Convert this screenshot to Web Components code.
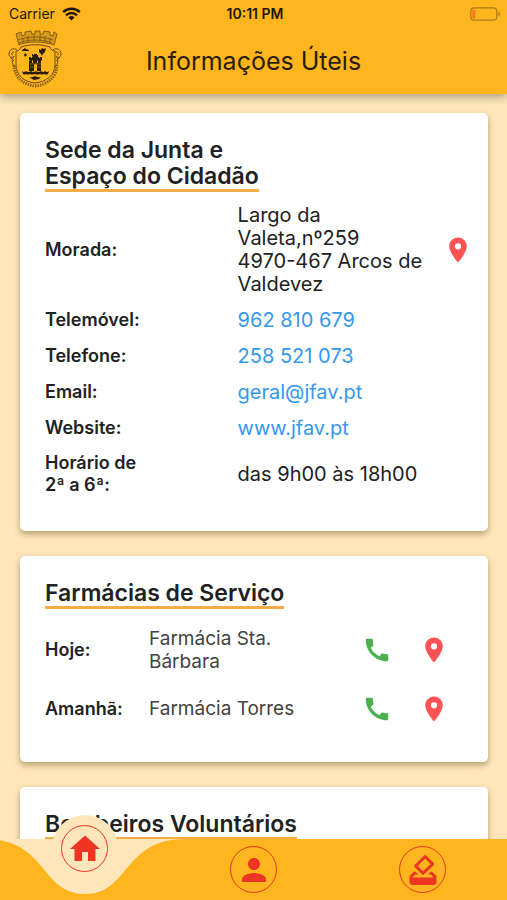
<!DOCTYPE html>
<html lang="pt">
<head>
<meta charset="utf-8">
<meta name="viewport" content="width=device-width, initial-scale=1">
<title>Informações Úteis</title>
<style>
  html, body { height: 100%; margin: 0; }
  body {
    --amber: #ffb51d;
    --cream: #fee6ba;
    --red: #ee3524;
    --line: #fbab45;
    font-family: Inter, "Noto Sans", sans-serif;
    color: #212121;
  }
</style>
</head>
<body>
<app-shell>
  <status-bar slot="top"></status-bar>
  <app-header slot="top">Informações Úteis</app-header>

  <info-card>
    <span slot="title">Sede da Junta e<br>Espaço do Cidadão</span>
    <contact-table></contact-table>
  </info-card>
  <info-card>
    <span slot="title">Farmácias de Serviço</span>
    <pharmacy-table></pharmacy-table>
  </info-card>
  <info-card>
    <span slot="title">Bombeiros Voluntários</span>
  </info-card>

  <nav-bar slot="bottom"></nav-bar>
</app-shell>

<script>
const ICONS = {
  pin: '<path d="M12 2C8.13 2 5 5.13 5 9c0 5.25 7 13 7 13s7-7.75 7-13c0-3.87-3.13-7-7-7zm0 9.5a2.5 2.5 0 1 1 0-5 2.5 2.5 0 0 1 0 5z"/>',
  phone: '<path d="M20.01 15.38c-1.23 0-2.42-.2-3.53-.56a.98.98 0 0 0-1.01.24l-1.57 1.97c-2.83-1.35-5.48-3.9-6.89-6.83l1.95-1.66c.27-.28.35-.67.24-1.02-.37-1.11-.56-2.3-.56-3.53 0-.54-.45-.99-.99-.99H4.19C3.65 3 3 3.24 3 3.99 3 13.28 10.73 21 20.01 21c.71 0 .99-.63.99-1.18v-3.45c0-.54-.45-.99-.99-.99z"/>',
  home: '<path d="M10 20v-6h4v6h5v-8h3L12 3 2 12h3v8z"/>',
  person: '<path d="M12 12c2.21 0 4-1.79 4-4s-1.79-4-4-4-4 1.79-4 4 1.79 4 4 4zm0 2c-2.67 0-8 1.34-8 4v2h16v-2c0-2.66-5.33-4-8-4z"/>',
  vote: '<path d="M18 13h-.68l-2 2h1.91L19 17H5l1.78-2h2.05l-2-2H6l-3 3v4c0 1.1.89 2 1.99 2H19c1.1 0 2-.89 2-2v-4l-3-3zm-1-5.05l-4.95 4.95-3.54-3.54 4.95-4.95L17 7.95zm-4.24-5.66L6.39 8.66a1 1 0 0 0 0 1.41l4.95 4.95c.39.39 1.02.39 1.41 0l6.36-6.36a1 1 0 0 0 0-1.41L14.16 2.3a.98.98 0 0 0-1.4-.01z"/>'
}

class AppShell extends HTMLElement{
  constructor(){
    super();
  }
  connectedCallback(){
    this.attachShadow({mode:"open"}).innerHTML=`
    <style>
      :host {
        display: flex;
        flex-direction: column;
        height: 100vh;
        background: var(--cream);
      }
      header {
        z-index: 1;
        background: var(--amber);
        box-shadow: 0 3px 8px rgba(0, 0, 0, 0.3);
      }
      main {
        flex: 1;
        min-height: 0;
        overflow-y: auto;
        scrollbar-width: none;
        display: flex;
        flex-direction: column;
        gap: 25px;
        padding: 19px 19px 25px 20px;
      }
    </style>
    <header><slot name="top"></slot></header>
    <main><slot></slot></main>
    <slot name="bottom"></slot>
    `;
  }
}

class StatusBar extends HTMLElement{
  constructor(){
    super();
  }
  connectedCallback(){
    this.attachShadow({mode:"open"}).innerHTML=`
    <style>
      :host {
        display: grid;
        grid-template-columns: 1fr auto 1fr;
        align-items: center;
        height: 27px;
        padding: 0 6px 0 9px;
        font-size: 14px;
        color: #1f1708;
      }
      .left { display: flex; align-items: center; gap: 7px; }
      .time { font-weight: 600; }
      .battery { justify-self: end; }
      svg { display: block; }
    </style>
    <span class="left">Carrier
      <svg width="19" height="14" viewBox="0 0 19 14" fill="none" stroke="#1f1708" stroke-width="2.5">
        <path d="M1.2 5.2a12 12 0 0 1 16.6 0"/>
        <path d="M4 8.3a8 8 0 0 1 11 0"/>
        <path d="M9.5 13.6 6.4 10.4a4.6 4.6 0 0 1 6.2 0z" fill="#1f1708" stroke="none"/>
      </svg>
    </span>
    <span class="time">10:11 PM</span>
    <svg class="battery" width="31" height="14" viewBox="0 0 31 14">
      <rect x=".8" y=".8" width="26" height="12.4" rx="3.5" fill="none" stroke="#a77919" stroke-width="1.2"/>
      <path d="M28.5 4.5c1.8.5 1.8 4.5 0 5z" fill="#a77919"/>
      <rect x="2.3" y="2.5" width="3" height="9" rx="1.3" fill="#ff7526"/>
    </svg>
    `;
  }
}

class AppHeader extends HTMLElement{
  constructor(){
    super();
  }
  connectedCallback(){
    this.attachShadow({mode:"open"}).innerHTML=`
    <style>
      :host {
        display: grid;
        grid-template-columns: 56px 1fr 56px;
        align-items: center;
        height: 67px;
        padding: 0 7px;
      }
      h1 {
        margin: 0;
        font-size: 25px;
        line-height: 30px;
        font-weight: 400;
        text-align: center;
        color: #2a1e08;
      }
      svg { display: block; align-self: start; margin-top: 3px; }
    </style>
    <svg width="56" height="60" viewBox="0 0 56 60" fill="none" stroke="#6b4c12" stroke-width="1">
      <!-- mural crown -->
      <path d="M9 4l5-2 1 4 3-1V2l6-1 1 3h3V1h5v3h3l1-3 6 1v3l3 1 1-4 3 2-3 11C37 11 19 11 12 15z" fill="#8c6415" fill-opacity=".35" stroke-width=".8"/>
      <path d="M11 10c10-4 25-4 35 0M12 13c9-4 24-4 33 0M16 8v5M21 6v6M27 5v6M33 5v6M38 6v6M43 8v5" stroke-width=".7"/>
      <!-- shield -->
      <path d="M14 17c9-3 20-3 29 0 1 3 3 4 5 4v14c0 10-9 17-20 18C17 52 9 45 9 35V21c2 0 4-1 5-4z"/>
      <path d="M7 35c0 12 10 20 21 21 12-1 22-9 22-21" stroke="#8c6415" stroke-width="3" stroke-dasharray="1.5 1"/>
      <path d="M10 20c-4-3-8 0-8 4s4 4 5 2c-3 4-2 8 1 11M7 22c-3 0-3 3-1 3M3 27l4 4M46 20c4-3 8 0 8 4s-4 4-5 2c3 4 2 8-1 11M49 22c3 0 3 3 1 3M53 27l-4 4"/>
      <g fill="#2b1e08" stroke="none">
        <path d="M22 41V31h1l-1-1v-3h2v1h1v-1h1v3l-1 1v2h1v-6l-1-1v-2h1v1h1v-1h3v1h1v2l-1 1v5h1v-2l-1-1v-3h2v1h1v-1h2v3l-1 1v10h-4v-6q-1-3-3 0v6z"/>
        <path d="M15 41q2 2 4 0 2 2 5 0 2 2 5 0 2 2 5 0 2 2 4 0 2 2 4 0l-1 3q-2 1-4 0-2 1-4 0-3 1-5 0-3 1-5 0-2 1-4 0-2 1-3 0z"/>
        <path d="M22 47q3 1 6-1 3 2 6 1l-2 2-5 1z"/>
        <path d="M15 20l3-2 1 1 3 1v1h-7zM18 23l2 2-2 2-1-2zM32 19l2 1 1-2 2 1 2-1-1 4-2 2-1 2-1-2-2-2z"/>
      </g>
      <path d="M23 34h11M23 37h11" stroke="#b38422" stroke-width=".6"/>
    </svg>
    <h1><slot></slot></h1>
    `;
  }
}

class InfoCard extends HTMLElement{
  constructor(){
    super();
  }
  connectedCallback(){
    this.attachShadow({mode:"open"}).innerHTML=`
    <style>
      :host {
        display: block;
        flex: none;
        padding: 24px 15px 24px 25px;
        background: #fff;
        border-radius: 5px;
        box-shadow: 0 3px 6px rgba(70, 50, 0, 0.4);
      }
      h2 {
        display: table;
        margin: 0;
        border-bottom: 3px solid var(--line);
        font-size: 23px;
        line-height: 26px;
        font-weight: 600;
      }
    </style>
    <h2><slot name="title"></slot></h2>
    <slot></slot>
    `;
  }
}

// rules shared by both tables
const tableStyle=`
  :host { display: block; }
  table { width: 100%; table-layout: fixed; border-collapse: collapse; }
  th, td { box-sizing: border-box; padding: 6px 0; text-align: left; vertical-align: middle; }
  th { font-size: 18px; line-height: 22px; font-weight: 600; }
  td { font-size: 20px; line-height: 23px; }
  a { color: #3598ec; text-decoration: none; }
  button {
    display: block;
    width: 30px;
    height: 30px;
    padding: 0;
    border: 0;
    background: none;
    cursor: pointer;
  }
  svg { display: block; width: 30px; height: 30px; }
  .pin { fill: #ff5252; }
  .phone { fill: #4caf50; }
`;

const iconButton=(icon, label)=>`
  <button class="${icon}" type="button" aria-label="${label}"><svg viewBox="0 0 24 24">${ICONS[icon]}</svg></button>`;

class ContactTable extends HTMLElement{
  constructor(){
    super();
  }
  connectedCallback(){
    this.attachShadow({mode:"open"}).innerHTML=`
    <style>
      ${tableStyle}
      :host { margin: 6px 0 5px; }
      tr { height: 36px; }
      th { width: 45%; padding-right: 80px; }
      .action { width: 30px; }
    </style>
    <table>
      <tr>
        <th scope="row">Morada:</th>
        <td>Largo da Valeta,nº259<br>4970-467 Arcos de Valdevez</td>
        <td class="action">${iconButton("pin","Ver no mapa")}</td>
      </tr>
      <tr><th scope="row">Telemóvel:</th><td colspan="2"><a href="tel:962810679">962 810 679</a></td></tr>
      <tr><th scope="row">Telefone:</th><td colspan="2"><a href="tel:258521073">258 521 073</a></td></tr>
      <tr><th scope="row">Email:</th><td colspan="2"><a href="mailto:geral@jfav.pt">geral@jfav.pt</a></td></tr>
      <tr><th scope="row">Website:</th><td colspan="2"><a href="#website">www.jfav.pt</a></td></tr>
      <tr><th scope="row">Horário de 2ª a 6ª:</th><td colspan="2">das 9h00 às 18h00</td></tr>
    </table>
    `;
  }
}

class PharmacyTable extends HTMLElement{
  constructor(){
    super();
  }
  connectedCallback(){
    const farmacias=[["Hoje:","Farmácia Sta. Bárbara"],["Amanhã:","Farmácia Torres"]];
    this.attachShadow({mode:"open"}).innerHTML=`
    <style>
      ${tableStyle}
      :host { margin-top: 11px; padding-right: 24px; }
      tr { height: 59px; }
      th { width: 104px; }
      td { padding-right: 20px; font-size: 19px; color: #424242; }
      .action { width: 42px; padding-right: 0; }
      .action + .action { width: 57px; }
      .action button { margin-left: auto; }
    </style>
    <table>
      ${farmacias.map(([dia,nome])=>`
      <tr>
        <th scope="row">${dia}</th>
        <td>${nome}</td>
        <td class="action">${iconButton("phone","Telefonar")}</td>
        <td class="action">${iconButton("pin","Ver no mapa")}</td>
      </tr>`).join("")}
    </table>
    `;
  }
}

class NavBar extends HTMLElement{
  constructor(){
    super();
  }
  connectedCallback(){
    this.attachShadow({mode:"open"}).innerHTML=`
    <style>
      :host { display: block; z-index: 1; background: var(--amber); }
      nav { display: grid; grid-template-columns: repeat(3, 1fr); height: 61px; }
      .item { position: relative; display: flex; justify-content: center; align-items: center; }
      button {
        display: grid;
        place-items: center;
        box-sizing: border-box;
        width: 47px;
        height: 47px;
        padding: 0;
        border: 1px solid var(--red);
        border-radius: 50%;
        background: none;
        cursor: pointer;
      }
      button svg { width: 36px; height: 36px; fill: var(--red); }
      /* the selected item sits in a dip of the bar, raised over the content */
      .dip {
        position: absolute;
        top: -32px;
        left: 50%;
        transform: translateX(-50%);
        fill: var(--cream);
      }
      .current button { position: absolute; top: -14px; }
    </style>
    <nav>
      <div class="item current">
        <svg class="dip" width="202" height="88" viewBox="0 0 202 88">
          <path d="M0 32C64 32 56 87 101 87S138 32 202 32z"/>
          <circle cx="101" cy="41" r="33"/>
        </svg>
        <button type="button" aria-label="Início" aria-current="page"><svg viewBox="0 0 24 24">${ICONS.home}</svg></button>
      </div>
      <div class="item"><button type="button" aria-label="Perfil"><svg viewBox="0 0 24 24">${ICONS.person}</svg></button></div>
      <div class="item"><button type="button" aria-label="Votar"><svg viewBox="0 0 24 24">${ICONS.vote}</svg></button></div>
    </nav>
    `;
  }
}

window.customElements.define('app-shell',AppShell)
window.customElements.define('status-bar',StatusBar)
window.customElements.define('app-header',AppHeader)
window.customElements.define('info-card',InfoCard)
window.customElements.define('contact-table',ContactTable)
window.customElements.define('pharmacy-table',PharmacyTable)
window.customElements.define('nav-bar',NavBar)
</script>
</body>
</html>
